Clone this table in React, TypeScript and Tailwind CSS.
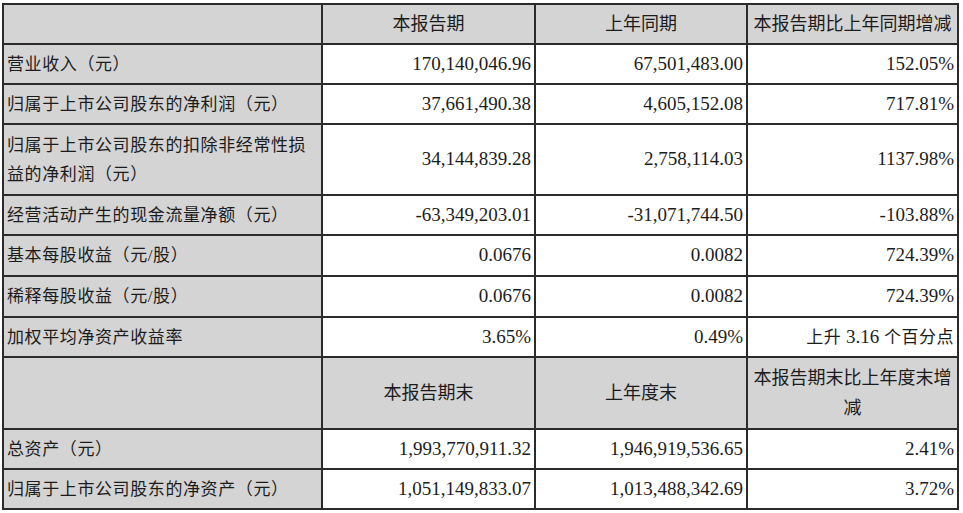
import React from "react";

const FONT = { fontFamily: '"Liberation Serif", "Noto Sans CJK SC", serif' };

type Row = { label: React.ReactNode; a: string; b: string; c: React.ReactNode; h: string };

const rows: Row[] = [
  { label: "营业收入（元）", a: "170,140,046.96", b: "67,501,483.00", c: "152.05%", h: "h-[40px]" },
  { label: "归属于上市公司股东的净利润（元）", a: "37,661,490.38", b: "4,605,152.08", c: "717.81%", h: "h-[40px]" },
  {
    label: (
      <>
        归属于上市公司股东的扣除非经常性损
        <br />
        益的净利润（元）
      </>
    ),
    a: "34,144,839.28",
    b: "2,758,114.03",
    c: "1137.98%",
    h: "h-[71px]",
  },
  { label: "经营活动产生的现金流量净额（元）", a: "-63,349,203.01", b: "-31,071,744.50", c: "-103.88%", h: "h-[40px]" },
  { label: "基本每股收益（元/股）", a: "0.0676", b: "0.0082", c: "724.39%", h: "h-[41px]" },
  { label: "稀释每股收益（元/股）", a: "0.0676", b: "0.0082", c: "724.39%", h: "h-[41px]" },
  {
    label: "加权平均净资产收益率",
    a: "3.65%",
    b: "0.49%",
    c: (
      <span className="text-[17px] tracking-[0.5px]">
        上升 <span className="text-[19px] tracking-normal">3.16</span> 个百分点
      </span>
    ),
    h: "h-[40px]",
  },
];

const rows2: Row[] = [
  { label: "总资产（元）", a: "1,993,770,911.32", b: "1,946,919,536.65", c: "2.41%", h: "h-[40px]" },
  { label: "归属于上市公司股东的净资产（元）", a: "1,051,149,833.07", b: "1,013,488,342.69", c: "3.72%", h: "h-[40px]" },
];

const cell = "border-2 border-[#2b2b2b] px-[3px] align-middle";
const head = `${cell} bg-[#d4d4d4] text-center text-[18px] leading-[30px]`;
const label = `${cell} bg-[#d4d4d4] text-left text-[17px] leading-[29px] tracking-[0.6px]`;
const num = `${cell} text-right text-[19px]`;

function DataRow({ r }: { r: Row }) {
  return (
    <tr className={r.h}>
      <td className={label}>{r.label}</td>
      <td className={num}>{r.a}</td>
      <td className={num}>{r.b}</td>
      <td className={num}>{r.c}</td>
    </tr>
  );
}

export default function App() {
  return (
    <div className="w-[963px] h-[513px] bg-white pl-[2px] pt-[3px] text-[#1c1c1c]" style={FONT}>
      <table className="w-[955px] table-fixed border-collapse">
        <colgroup>
          <col className="w-[319px]" />
          <col className="w-[213px]" />
          <col className="w-[212px]" />
          <col className="w-[211px]" />
        </colgroup>
        <tbody>
          <tr className="h-[40px]">
            <td className={head}></td>
            <td className={head}>本报告期</td>
            <td className={head}>上年同期</td>
            <td className={`${head} whitespace-nowrap`}>本报告期比上年同期增减</td>
          </tr>
          {rows.map((r, i) => (
            <DataRow key={i} r={r} />
          ))}
          <tr className="h-[72px]">
            <td className={head}></td>
            <td className={head}>本报告期末</td>
            <td className={head}>上年度末</td>
            <td className={head}>
              本报告期末比上年度末增
              <br />减
            </td>
          </tr>
          {rows2.map((r, i) => (
            <DataRow key={i} r={r} />
          ))}
        </tbody>
      </table>
    </div>
  );
}
